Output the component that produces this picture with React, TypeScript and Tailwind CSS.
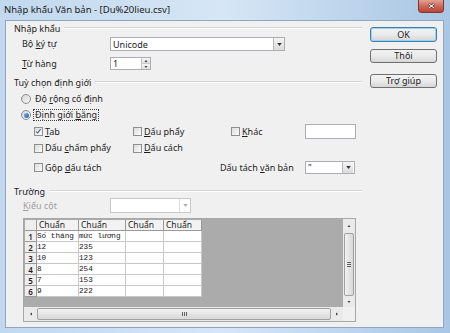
import React from "react";

const ui = { fontFamily: '"Noto Sans", "Open Sans", sans-serif' };
const mono = { fontFamily: '"Liberation Mono", "DejaVu Sans Mono", monospace' };

function U({ children }: { children: React.ReactNode }) {
  return <span className="underline underline-offset-1">{children}</span>;
}

function SectionHeader({ children }: { children: React.ReactNode }) {
  return (
    <div className="flex h-[12px] items-center pl-[8px]">
      <span className="text-[#1e1e1e] leading-none">{children}</span>
      <div className="ml-[4px] flex-1 border-t border-t-[#d5d5d5] border-b border-b-white" />
    </div>
  );
}

function Check({ checked }: { checked?: boolean }) {
  return (
    <div className="relative h-[9px] w-[9px] border border-[#8e8f8f] bg-gradient-to-br from-[#dcdcdc] to-[#fbfbfb]">
      {checked && (
        <svg viewBox="0 0 9 9" className="absolute left-0 top-0 h-[7px] w-[7px]">
          <path d="M1.5 4.5 L3.3 6.5 L7.2 1.5" stroke="#3b5a86" strokeWidth="1.3" fill="none" />
        </svg>
      )}
    </div>
  );
}

function Radio({ selected }: { selected?: boolean }) {
  return (
    <div className="flex h-[10px] w-[10px] items-center justify-center rounded-full border border-[#8e8f8f] bg-gradient-to-br from-[#d4d4d4] to-[#fafafa]">
      {selected && <div className="h-[5px] w-[5px] rounded-full bg-gradient-to-br from-[#7ab4e8] to-[#1f5fa8]" />}
    </div>
  );
}

function DropBtn({ disabled }: { disabled?: boolean }) {
  return (
    <div className={"flex h-full w-[11px] items-center justify-center border-l " + (disabled ? "border-l-[#dcdcdc]" : "border-l-[#b8b8b8] bg-gradient-to-b from-[#f4f4f4] to-[#dcdcdc]")}>
      <svg viewBox="0 0 6 4" className="h-[3px] w-[5px]">
        <path d="M0 0 L6 0 L3 4 Z" fill={disabled ? "#b0b0b0" : "#303030"} />
      </svg>
    </div>
  );
}

function Button({ children, def }: { children: React.ReactNode; def?: boolean }) {
  return (
    <div
      className={
        "flex w-[67px] items-center justify-center rounded-[3px] border bg-gradient-to-b from-[#f2f2f2] via-[#ebebeb] to-[#d6d6d6] text-[#1e1e1e] " +
        (def ? "h-[15px] border-[#3c7fb1] shadow-[inset_0_0_0_1px_#9ad4f2]" : "h-[14px] border-[#707070]")
      }
    >
      {children}
    </div>
  );
}

function ScrollArrow({ dir }: { dir: "up" | "down" | "left" | "right" }) {
  const d =
    dir === "up" ? "M0 4 L6 4 L3 0 Z" : dir === "down" ? "M0 0 L6 0 L3 4 Z" : dir === "left" ? "M4 0 L4 6 L0 3 Z" : "M0 0 L0 6 L4 3 Z";
  const vb = dir === "up" || dir === "down" ? "0 0 6 4" : "0 0 4 6";
  const cls = dir === "up" || dir === "down" ? "h-[2px] w-[4px]" : "h-[4px] w-[2px]";
  return (
    <svg viewBox={vb} className={cls}>
      <path d={d} fill="#404040" />
    </svg>
  );
}

const cols = [{ w: "w-[42px]" }, { w: "w-[47px]" }, { w: "w-[38px]" }, { w: "w-[38px]" }];

const rows: [string, string][] = [
  ["Số tháng", "mức lương"],
  ["12", "235"],
  ["10", "123"],
  ["8", "254"],
  ["7", "153"],
  ["9", "222"],
];

function Grid() {
  return (
    <div className="ml-px mt-px flex flex-col">
      <div className="flex h-[11px]">
        <div className="w-[12px] border-r border-b border-[#9a9a9a] bg-[#eeeeee]" />
        {cols.map((c, i) => (
          <div key={i} className={c.w + " flex items-center border-r border-b border-[#9a9a9a] bg-[#f2f2f2] pl-[2px] text-[8.5px] leading-none text-[#1e1e1e]"}>
            Chuẩn
          </div>
        ))}
      </div>
      {rows.map((r, i) => (
        <div key={i} className="flex h-[11px] overflow-hidden">
          <div className="flex h-[11px] w-[12px] items-center justify-center overflow-hidden border-r border-b border-[#9a9a9a] bg-[#eeeeee] text-[8px] font-semibold leading-[9px] text-[#1e1e1e]" style={ui}>
            {i + 1}
          </div>
          {[r[0], r[1], "", ""].map((v, j) => (
            <div
              key={j}
              className={cols[j].w + " flex h-[11px] items-center whitespace-nowrap border-r border-b border-[#c8c8c8] bg-white text-[7.7px] leading-[9px] text-[#202020]"}
              style={mono}
            >
              {v}
            </div>
          ))}
        </div>
      ))}
    </div>
  );
}

function Table() {
  return (
    <div className="ml-[17px] flex h-[104px] w-[333px] flex-col border border-[#a8a8a8] bg-[#ababab]">
      <div className="flex h-[88px]">
        <div className="flex-1">
          <Grid />
        </div>
        <div className="flex w-[12px] flex-col bg-[#eaeaea]">
          <div className="flex h-[14px] items-center justify-center">
            <ScrollArrow dir="up" />
          </div>
          <div className="mx-[1px] flex flex-1 items-center justify-center rounded-[2px] border border-[#a0a0a0] bg-gradient-to-r from-[#f2f2f2] to-[#d8d8d8]">
            <div className="flex flex-col gap-[1px]">
              <div className="h-px w-[4px] bg-[#606060]" />
              <div className="h-px w-[4px] bg-[#606060]" />
              <div className="h-px w-[4px] bg-[#606060]" />
            </div>
          </div>
          <div className="flex h-[11px] items-center justify-center">
            <ScrollArrow dir="down" />
          </div>
        </div>
      </div>
      <div className="flex h-[14px] bg-[#eaeaea]">
        <div className="flex w-[13px] items-center justify-center">
          <ScrollArrow dir="left" />
        </div>
        <div className="my-[1px] flex flex-1 items-center justify-center rounded-[2px] border border-[#a0a0a0] bg-gradient-to-b from-[#f2f2f2] to-[#d8d8d8]">
          <div className="flex gap-[1px]">
            <div className="h-[4px] w-px bg-[#606060]" />
            <div className="h-[4px] w-px bg-[#606060]" />
            <div className="h-[4px] w-px bg-[#606060]" />
          </div>
        </div>
        <div className="flex w-[12px] items-center justify-center">
          <ScrollArrow dir="right" />
        </div>
        <div className="w-[12px] bg-[#f0f0f0]" />
      </div>
    </div>
  );
}

export default function App() {
  return (
    <div
      className="relative flex h-[333px] w-[450px] flex-col overflow-hidden bg-gradient-to-r from-[#c2d8ee] via-[#d6e6f5] to-[#a9c6e4] text-[9px] text-[#1e1e1e]"
      style={ui}
    >
      <div className="flex h-[20px] items-start">
        <div className="ml-[4px] mt-[3px] leading-[14px] text-[#1a1a1a] text-[9.5px]">Nhập khẩu Văn bản - [Du%20lieu.csv]</div>
        <div className="ml-auto mr-[6px] flex h-[13px] w-[26px] items-center justify-center rounded-b-[4px] border border-t-0 border-[#7a3a36] bg-gradient-to-b from-[#e4a192] via-[#cf6a5a] to-[#c0412f]">
          <svg viewBox="0 0 8 7" className="h-[6px] w-[7px]">
            <path d="M1 1 L7 6 M7 1 L1 6" stroke="#3a1a18" strokeWidth="2.6" />
            <path d="M1 1 L7 6 M7 1 L1 6" stroke="#ffffff" strokeWidth="1.4" />
          </svg>
        </div>
      </div>

      <div className="ml-[5px] mr-[6px] mb-[5px] flex flex-1 border border-[#8da6c2] bg-[#f0f0f0]">
        <div className="flex w-[356px] flex-col">
          <div className="mt-[1px]">
            <SectionHeader>Nhập khẩu</SectionHeader>
          </div>
          <div className="mt-[3px] flex h-[14px] items-center">
            <div className="w-[104px] pl-[16px]">
              Bộ <U>k</U>ý tự
            </div>
            <div className="flex h-[14px] w-[175px] items-center border border-[#abadb3] bg-white">
              <span className="flex-1 pl-[2px] leading-none">Unicode</span>
              <DropBtn />
            </div>
          </div>
          <div className="mt-[6px] flex h-[13px] items-center">
            <div className="w-[104px] pl-[16px]">
              <U>T</U>ừ hàng
            </div>
            <div className="flex h-[13px] w-[41px] items-center border border-[#abadb3] bg-white">
              <span className="flex-1 pl-[2px] leading-none">1</span>
              <div className="flex h-full w-[9px] flex-col border-l border-[#c8c8c8]">
                <div className="flex flex-1 items-center justify-center border-b border-[#c8c8c8] bg-gradient-to-b from-[#f6f6f6] to-[#e0e0e0]">
                  <ScrollArrow dir="up" />
                </div>
                <div className="flex flex-1 items-center justify-center bg-gradient-to-b from-[#f6f6f6] to-[#e0e0e0]">
                  <ScrollArrow dir="down" />
                </div>
              </div>
            </div>
          </div>
          <div className="mt-[6px]">
            <SectionHeader>Tuỳ chọn định giới</SectionHeader>
          </div>
          <div className="mt-[5px] flex h-[12px] items-center pl-[15px]">
            <Radio />
            <span className="ml-[4px]">
              Độ <U>r</U>ộng cố định
            </span>
          </div>
          <div className="mt-[4px] flex h-[12px] items-center pl-[15px]">
            <Radio selected />
            <span className="ml-[2px] border border-dotted border-[#404040] px-[1px] leading-[10px]">
              Định giới <U>b</U>ằng
            </span>
          </div>
          <div className="mt-[3px] flex h-[15px] items-center">
            <div className="flex w-[127px] items-center pl-[28px]">
              <Check checked />
              <span className="ml-[2px]">
                <U>T</U>ab
              </span>
            </div>
            <div className="flex w-[98px] items-center">
              <Check />
              <span className="ml-[2px]">
                <U>D</U>ấu phẩy
              </span>
            </div>
            <div className="flex w-[74px] items-center">
              <Check />
              <span className="ml-[2px]">
                <U>K</U>hác
              </span>
            </div>
            <div className="h-[15px] w-[51px] border border-[#abadb3] bg-white" />
          </div>
          <div className="mt-[3px] flex h-[12px] items-center">
            <div className="flex w-[127px] items-center pl-[28px]">
              <Check />
              <span className="ml-[2px]">
                Dấu <U>c</U>hấm phẩy
              </span>
            </div>
            <div className="flex items-center">
              <Check />
              <span className="ml-[2px]">
                <U>D</U>ấu cách
              </span>
            </div>
          </div>
          <div className="mt-[7px] flex h-[13px] items-center">
            <div className="flex w-[214px] items-center pl-[28px]">
              <Check />
              <span className="ml-[2px]">
                Gộp <U>d</U>ấu tách
              </span>
            </div>
            <div className="w-[85px]">
              Dấu tách <U>v</U>ăn bản
            </div>
            <div className="flex h-[13px] w-[50px] items-center border border-[#abadb3] bg-white">
              <span className="flex-1 pl-[2px] leading-none">"</span>
              <div className="mr-px h-[11px]">
                <DropBtn />
              </div>
            </div>
          </div>
          <div className="mt-[11px]">
            <SectionHeader>Trường</SectionHeader>
          </div>
          <div className="mt-[1px] flex h-[15px] items-center">
            <div className="w-[104px] pl-[17px] text-[#a0a0a0]">
              <U>K</U>iểu cột
            </div>
            <div className="flex h-[15px] w-[81px] items-center border border-[#c8c8c8] bg-white">
              <span className="flex-1" />
              <div className="h-[13px]">
                <DropBtn disabled />
              </div>
            </div>
          </div>
          <div className="mt-[5px]">
            <Table />
          </div>
        </div>
        <div className="ml-[8px] flex flex-col">
          <div className="mt-[6px]">
            <Button def>OK</Button>
          </div>
          <div className="mt-[7px]">
            <Button>Thôi</Button>
          </div>
          <div className="mt-[11px]">
            <Button>Trợ giúp</Button>
          </div>
        </div>
      </div>
    </div>
  );
}
